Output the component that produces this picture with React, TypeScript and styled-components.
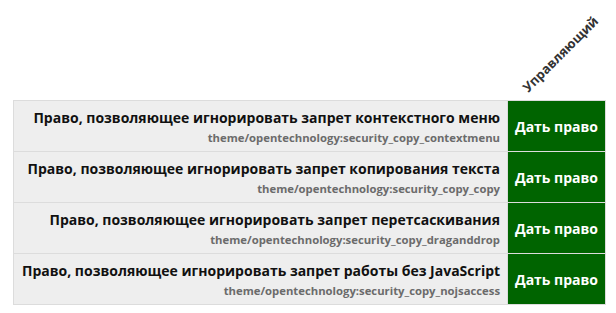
import React from "react";
import styled, { createGlobalStyle } from "styled-components";

interface IRight {
    title: string;
    code: string;
}

const rights: IRight[] = [
    { title: "Право, позволяющее игнорировать запрет контекстного меню", code: "theme/opentechnology:security_copy_contextmenu" },
    { title: "Право, позволяющее игнорировать запрет копирования текста", code: "theme/opentechnology:security_copy_copy" },
    { title: "Право, позволяющее игнорировать запрет перетсаскивания", code: "theme/opentechnology:security_copy_draganddrop" },
    { title: "Право, позволяющее игнорировать запрет работы без JavaScript", code: "theme/opentechnology:security_copy_nojsaccess" },
];

const App: React.FC = () => {
    return (
        <>
            <GlobalStyle />
            <Page>
                <Table>
                    <colgroup>
                        <col />
                        <RoleCol />
                    </colgroup>
                    <thead>
                        <tr>
                            <EmptyHead />
                            <RoleHead>
                                <RoleLabel>Управляющий</RoleLabel>
                            </RoleHead>
                        </tr>
                    </thead>
                    <tbody>
                        {rights.map((r) => (
                            <Row key={r.code}>
                                <NameCell>
                                    <Title>{r.title}</Title>
                                    <Code>{r.code}</Code>
                                </NameCell>
                                <GrantCell>Дать право</GrantCell>
                            </Row>
                        ))}
                    </tbody>
                </Table>
            </Page>
        </>
    );
};

const GlobalStyle = createGlobalStyle`
    body {
        margin: 0;
        background: #fff;
        font-family: 'Open Sans', 'Liberation Sans', sans-serif;
    }
`;

const Page = styled.div`
    padding: 0 10px 0 13px;
`;

const Table = styled.table`
    width: 100%;
    border-collapse: collapse;
    table-layout: fixed;
`;

const RoleCol = styled.col`
    width: 98px;
`;

const EmptyHead = styled.th`
    padding: 0;
    height: 100px;
`;

const RoleHead = styled.th`
    height: 100px;
    padding: 0;
    text-align: center;
    vertical-align: middle;
    white-space: nowrap;
`;

const RoleLabel = styled.div`
    display: inline-block;
    transform: translate(2px, 3px) rotate(-45deg);
    font-size: 13px;
    font-weight: 700;
    color: #333;
    white-space: nowrap;
`;

const Row = styled.tr`
    border: 1px solid #dcdcdc;
`;

const NameCell = styled.td`
    background: #eeeeee;
    text-align: right;
    padding: 7px 7px 5px 8px;
    border: 1px solid #dcdcdc;
    white-space: nowrap;
`;

const Title = styled.div`
    font-size: 14px;
    font-weight: 700;
    line-height: 20px;
    color: #111;
`;

const Code = styled.div`
    font-size: 11.3px;
    font-weight: 700;
    line-height: 16px;
    color: #6b6b6b;
    margin-top: 2px;
`;

const GrantCell = styled.td`
    background: #006400;
    color: #fff;
    font-size: 14px;
    font-weight: 700;
    text-align: center;
    vertical-align: middle;
    padding: 0;
    border: 1px solid #dcdcdc;
    white-space: nowrap;
`;

export default App;
